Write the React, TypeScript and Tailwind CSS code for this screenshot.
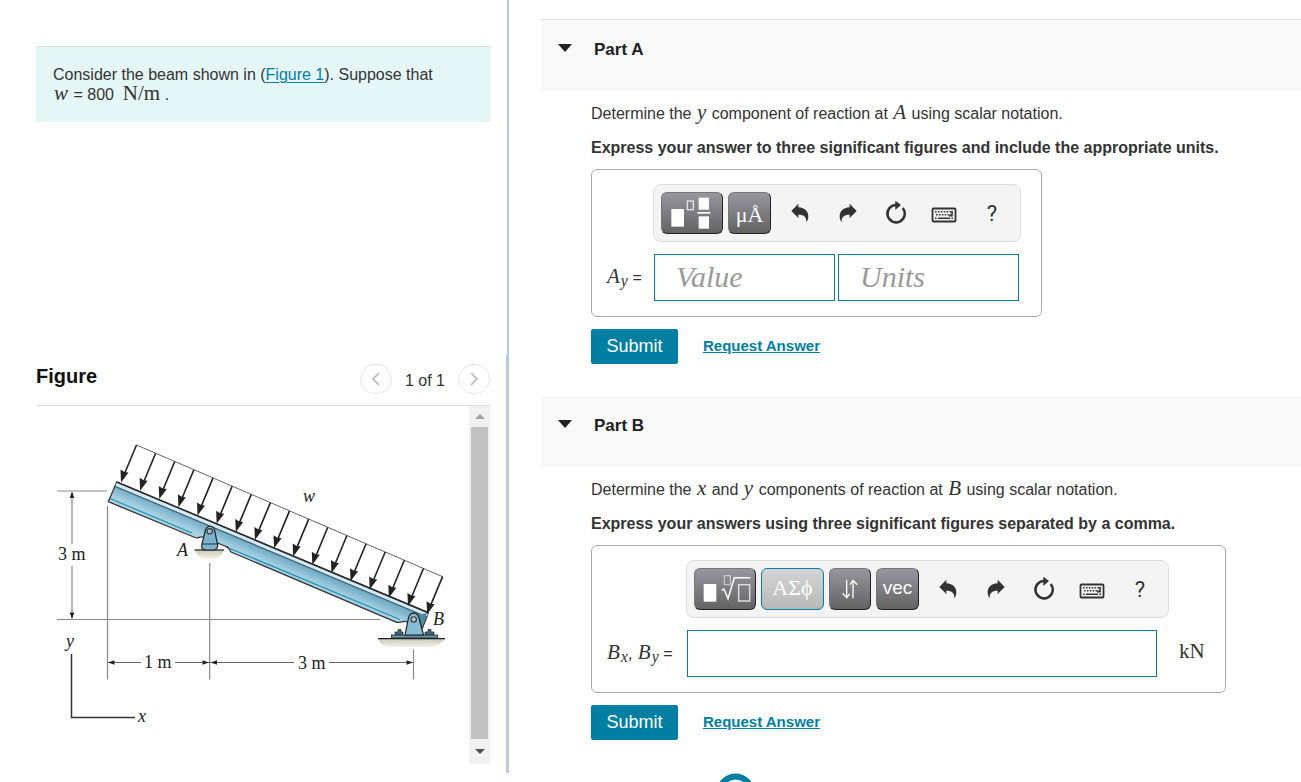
import React, { useState } from 'react';

const Var: React.FC<{ children: React.ReactNode }> = ({ children }) => (
  <i className="font-['Liberation_Serif',serif] text-[21px] leading-[0px] px-px">{children}</i>
);

const Sub: React.FC<{ children: React.ReactNode }> = ({ children }) => (
  <sub className="font-['Liberation_Serif',serif] italic text-[16px] leading-[0px] bottom-[-3px]">{children}</sub>
);

/* toolbar icons */
const UndoIcon = ({ flip = false }: { flip?: boolean }) => (
  <svg viewBox="0 0 66 66" className={flip ? 'w-[22px] h-[22px] -scale-x-100' : 'w-[22px] h-[22px]'} fill="#333">
    <path d="M7 27 L28 5 V16 C49 17 58 30 58 42 C58 50 56 56 52 61 C53 46 46 38 28 38 V48 Z" />
  </svg>
);

const ResetIcon = () => (
  <svg viewBox="0 0 72 72" className="w-6 h-6" fill="none">
    <path d="M36 12 A26 26 0 1 0 56 21" stroke="#333" strokeWidth="7.5" />
    <path d="M34 -1 L51 12 L34 27 Z" fill="#333" />
  </svg>
);

const KeyboardIcon = () => (
  <svg viewBox="0 0 26 16" className="w-[26px] h-4" fill="none" stroke="#333">
    <rect x="1.5" y="1.5" width="23" height="13" rx="1" strokeWidth="1.8" />
    <path d="M4 4.8 H22" strokeWidth="1.6" strokeDasharray="1.6 1.3" />
    <path d="M5 7.8 H20" strokeWidth="1.6" strokeDasharray="1.6 1.3" />
    <path d="M21 4 V8.6 H18" strokeWidth="1.6" />
    <path d="M4 11.2 H5.6 M7 11.2 H19 M20.4 11.2 H22" strokeWidth="1.6" />
  </svg>
);

const TemplateIcon = () => (
  <svg viewBox="0 0 120 96" className="w-10 h-8 mr-[3px]" fill="#fff">
    <rect x="1" y="36" width="38" height="53" />
    <rect x="49" y="12" width="18" height="26" fill="none" stroke="#e4e4e4" strokeWidth="4" />
    <rect x="83" y="2" width="31" height="36" />
    <rect x="79" y="45" width="39" height="5" />
    <rect x="83" y="58" width="31" height="37" />
  </svg>
);

const RootIcon = () => (
  <svg viewBox="0 0 144 90" className="w-12 h-[30px] ml-[3px]" fill="none">
    <rect x="2" y="30" width="38" height="53" fill="#fff" />
    <rect x="64" y="5" width="18" height="27" stroke="#ccc" strokeWidth="3.5" />
    <path d="M56 49 L63 45 L75 74 L94 11 H142" stroke="#fff" strokeWidth="4.5" />
    <rect x="107" y="32" width="33" height="49" stroke="#ddd" strokeWidth="4.5" />
  </svg>
);

const SwapIcon = () => (
  <svg viewBox="0 0 54 66" className="w-[18px] h-[22px]" fill="none" stroke="#fff" strokeWidth="4">
    <path d="M17 5 V58 M5 46 L17 59 L26 48" />
    <path d="M36 61 V8 M27 20 L36 7 L49 20" />
  </svg>
);

interface KeyProps {
  label: string;
  width: string;
  active?: boolean;
  children: React.ReactNode;
}

const Key: React.FC<KeyProps> = ({ label, width, active, children }) => (
  <button
    type="button"
    aria-label={label}
    className={`${width} h-[42px] flex items-center justify-center rounded-md border text-white leading-none ${
      active
        ? 'border-[#007fa3] bg-linear-to-b from-[#d4d4d4] to-[#b9b9b9]'
        : 'border-t-[#777] border-l-[#777] border-r-[#222] border-b-[#222] bg-linear-to-b from-[#9896a0] to-[#636363]'
    }`}
  >
    {children}
  </button>
);

const Tools = () => (
  <div className="flex items-center">
    <button type="button" aria-label="Undo" className="w-12 h-10 flex items-center justify-center"><UndoIcon /></button>
    <button type="button" aria-label="Redo" className="w-12 h-10 flex items-center justify-center"><UndoIcon flip /></button>
    <button type="button" aria-label="Reset" className="w-12 h-10 flex items-center justify-center"><ResetIcon /></button>
    <button type="button" aria-label="Keyboard" className="w-12 h-10 flex items-center justify-center pt-1"><KeyboardIcon /></button>
    <button type="button" aria-label="Help" className="w-12 h-10 flex items-center justify-center font-[Roboto,sans-serif] text-[22px] text-[#333]">?</button>
  </div>
);

const Toolbar: React.FC<{ children: React.ReactNode }> = ({ children }) => (
  <div className="h-[58px] flex items-center gap-[5px] rounded-lg border border-[#ddd] bg-[#f4f4f4] pl-[7px] pr-1">
    {children}
    <Tools />
  </div>
);

interface PartProps {
  title: string;
  topLine?: boolean;
  question: React.ReactNode;
  instruction: string;
  children: React.ReactNode;
}

const Part: React.FC<PartProps> = ({ title, topLine, question, instruction, children }) => {
  const [open, setOpen] = useState(true);

  return (
    <section className="mb-8">
      <h2 className={topLine ? 'bg-[#f9f9f9] border-t border-[#ddd]' : 'bg-[#f9f9f9]'}>
        <button
          type="button"
          aria-expanded={open}
          onClick={() => setOpen(!open)}
          className="w-full h-[71px] flex items-start pt-5 pl-[17px] text-[17px] leading-5 font-bold text-[#222]"
        >
          <svg viewBox="0 0 14 8" className="w-[14px] h-2 mt-1 mr-[22px]" fill="#222"><path d="M0 0 H14 L7 8 Z" /></svg>
          {title}
        </button>
      </h2>
      {open && (
        <div className="pl-[50px] pt-[13px]">
          <p className="leading-5 whitespace-nowrap">{question}</p>
          <p className="leading-5 mt-3.5 font-bold whitespace-nowrap">{instruction}</p>
          {children}
          <div className="flex items-center mt-3">
            <button type="submit" className="w-[87px] h-[35px] rounded-xs bg-[#007fa3] text-white text-[18px]">Submit</button>
            <a href="#request" className="ml-[25px] text-[15px] font-bold text-[#007fa3] underline">Request Answer</a>
          </div>
        </div>
      )}
    </section>
  );
};

/* distributed load: 17 arrows evenly spaced along the beam */
const ARROWS = Array.from({ length: 17 }, (_, i) => ({ x: 136.5 + i * 19.13, y: 445 + i * 8.23 }));

const BeamFigure = () => (
  <svg viewBox="36 406 433 358" className="w-[433px] h-[358px] shrink-0" role="img" aria-label="Inclined beam with distributed load w">
    <defs>
      <linearGradient id="beam" gradientUnits="userSpaceOnUse" x1="270" y1="548" x2="261" y2="569">
        <stop offset="0" stopColor="#5f9fbc" />
        <stop offset="0.6" stopColor="#a3cde0" />
        <stop offset="1" stopColor="#b5d8e8" />
      </linearGradient>
      <linearGradient id="ground" x1="0" y1="0" x2="0" y2="1">
        <stop offset="0" stopColor="#cfcab8" />
        <stop offset="1" stopColor="#f3f1ea" />
      </linearGradient>
    </defs>

    {/* dimension lines */}
    <g stroke="#8a8a8a" strokeWidth="1.2" fill="none">
      <path d="M57 491 H107 M57 619.5 H380" />
      <path d="M72 493 V544 M72 566 V618" />
      <path d="M107.5 506 V679.5 M209.7 563 V679.5 M413.5 649.5 V679.5" />
      <path d="M108 662.5 H141 M175 662.5 H294 M329 662.5 H413" stroke="#666" />
    </g>
    <g fill="#222">
      <path d="M72 491.5 l-2.3 6.5 h4.6 Z M72 619 l-2.3 -6.5 h4.6 Z" />
      <path d="M108 662.5 l6.5 -2.2 v4.4 Z M209 662.5 l-6.5 -2.2 v4.4 Z" />
      <path d="M210.5 662.5 l6.5 -2.2 v4.4 Z M413 662.5 l-6.5 -2.2 v4.4 Z" />
    </g>
    <path d="M71.5 654 V717.5 H135" fill="none" stroke="#333" strokeWidth="1.5" />

    {/* ground under both supports */}
    <path d="M195 550 H224 C221 558 216 559 210 559 C203 559 197 557 195 550 Z" fill="url(#ground)" />
    <path d="M378 639 H445 C439 646 433 648 423 647 H395 C386 648 382 646 378 639 Z" fill="url(#ground)" />

    {/* beam */}
    <path
      d="M116.7 482 L428.3 612.7 L422.5 628 L407 622 C404 620 401 623 396.7 622.3 L231 552 C229 549 229 547 226 546.5 L203 537 C200 536 198 539 195 537.5 L108.3 501.7 Z"
      fill="url(#beam)" stroke="#333" strokeWidth="1.3" strokeLinejoin="round"
    />
    <path d="M116.7 482.5 L428 613.2 L427 616.5 L115.5 486 Z" fill="#d3e8f0" />
    <path d="M115.3 486.5 L427 617" stroke="#46606c" strokeWidth="1.2" />
    <path d="M116.7 482 L428.3 612.7" stroke="#2b2b2b" strokeWidth="1.5" />
    <path d="M110 498.5 L192 533 M230 548.5 L400 619.5" stroke="#1b94ae" strokeWidth="1.2" />
    <path d="M427 613 L421 629 L417 615 Z" fill="#4e8ba5" />

    {/* load */}
    <path d="M136.5 445 L442.6 576.7" stroke="#666" strokeWidth="1" />
    {ARROWS.map(({ x, y }) => (
      <g key={x} transform={`translate(${x} ${y})`}>
        <path d="M0 0 L-12.5 30" stroke="#222" strokeWidth="1.6" />
        <path d="M-15.5 37.5 L-16 24.5 L-12 27 L-8 27.5 Z" fill="#222" />
      </g>
    ))}

    {/* support A */}
    <path d="M194.5 550 H224" stroke="#444" strokeWidth="1.5" />
    <path d="M201.7 545 L205.5 530 C207 525 213 525 214.5 530 L217.7 545 C218 548 216 550 213 550 H206 C202 550 201.5 548 201.7 545 Z" fill="#79b4d0" stroke="#222" strokeWidth="1.2" />
    <path d="M202 544 H217.5" stroke="#222" strokeWidth="0.9" />
    <circle cx="209.7" cy="531.3" r="2.7" fill="#b7bec2" stroke="#333" strokeWidth="1.1" />

    {/* support B */}
    <rect x="391.5" y="635" width="46" height="3" fill="#5c97b3" stroke="#222" strokeWidth="0.8" />
    <path d="M395 634.5 V632 H398 V629.5 H401 V632 H403 V634.5 Z M425 634.5 V632 H428 V629.5 H431 V632 H434 V634.5 Z" fill="#3a6c84" stroke="#222" strokeWidth="0.7" />
    <path d="M405 635 L408.5 618 C410 611.5 417.5 611.5 419 618 L423.5 635 Z" fill="#86bcd6" stroke="#222" strokeWidth="1.2" />
    <circle cx="413.7" cy="619.5" r="2.7" fill="#b7bec2" stroke="#333" strokeWidth="1.1" />
    <path d="M378 638.7 H445" stroke="#222" strokeWidth="1.3" />

    <g className="font-['Liberation_Serif',serif]" fill="#222" fontSize="18">
      <text x="58" y="560">3 m</text>
      <text x="144" y="668">1 m</text>
      <text x="298" y="669">3 m</text>
      <g fontStyle="italic">
        <text x="303" y="502">w</text>
        <text x="177" y="556">A</text>
        <text x="433" y="625">B</text>
        <text x="66" y="647">y</text>
        <text x="138" y="722">x</text>
      </g>
    </g>
  </svg>
);

const App: React.FC = () => {
  return (
    <div className="h-screen overflow-hidden bg-white grid grid-rows-1 grid-cols-[509fr_792fr] font-['Liberation_Sans',Arial,sans-serif] text-[16px] text-[#333]">
      <aside className="flex flex-col min-h-0 pb-[9px]">
        <div className="h-[355px] shrink-0 border-r-2 border-[#b8cce0] pt-[46px] pl-9 pr-4">
          <div className="bg-[#e5f6f7] border-t border-[#ddd] pt-[18px] pl-[17px] h-[76px] leading-5">
            <p>Consider the beam shown in (<a href="#figure" className="text-[#007fa3] underline underline-offset-2">Figure 1</a>). Suppose that</p>
            <p><Var>w</Var> = 800 &nbsp;<span className="font-['Liberation_Serif',serif] text-[21px] leading-[0px]">N/m</span> .</p>
          </div>
        </div>

        <div id="figure" className="flex-1 min-h-0 flex flex-col border-r-[3px] border-[#b8cce0] pl-9 pr-4 pb-[9px]">
          <div className="h-[51px] shrink-0 flex items-center justify-between border-b border-[#ddd]">
            <h2 className="text-[20px] leading-6 font-bold text-[#111] mb-2">Figure</h2>
            <div className="flex items-center">
              <button type="button" aria-label="Previous" className="w-8 h-[30px] mb-0.5 rounded-full border border-[#e6e6e6] flex items-center justify-center">
                <svg viewBox="0 0 10 14" className="w-2.5 h-3.5" fill="none" stroke="#c4c4c4" strokeWidth="2"><path d="M8 1 L2 7 L8 13" /></svg>
              </button>
              <span className="px-[13px] pt-0.5">1 of 1</span>
              <button type="button" aria-label="Next" className="w-8 h-[30px] mb-0.5 rounded-full border border-[#e6e6e6] flex items-center justify-center">
                <svg viewBox="0 0 10 14" className="w-2.5 h-3.5" fill="none" stroke="#c4c4c4" strokeWidth="2"><path d="M2 1 L8 7 L2 13" /></svg>
              </button>
            </div>
          </div>
          <div className="flex-1 min-h-0 flex justify-between overflow-hidden">
            <BeamFigure />
            <div className="w-[21px] shrink-0 bg-[#f1f1f1] flex flex-col items-center">
              <button type="button" aria-label="Scroll up" className="h-[21px] w-full flex items-center justify-center">
                <svg viewBox="0 0 10 5" className="w-2.5 h-[5px]" fill="#a3a3a3"><path d="M0 5 L5 0 L10 5 Z" /></svg>
              </button>
              <div className="flex-1 w-[17px] bg-[#c1c1c1]" />
              <button type="button" aria-label="Scroll down" className="h-[25px] w-full flex items-center justify-center">
                <svg viewBox="0 0 10 5" className="w-2.5 h-[5px]" fill="#505050"><path d="M0 0 L5 5 L10 0 Z" /></svg>
              </button>
            </div>
          </div>
        </div>
      </aside>

      <main className="pl-8 pt-[19px] min-w-0">
        <Part
          title="Part A"
          topLine
          question={<>Determine the <Var>y</Var> component of reaction at <Var>A</Var> using scalar notation.</>}
          instruction="Express your answer to three significant figures and include the appropriate units."
        >
          <div className="w-fit mt-[11px] rounded-md border border-[#aaa] pt-3.5 pb-[15px] pr-5 grid grid-cols-[61px_auto] gap-y-3">
            <div className="col-start-2">
              <Toolbar>
                <Key label="Templates" width="w-[62px]"><TemplateIcon /></Key>
                <Key label="Units" width="w-[43px]"><span className="font-['Liberation_Serif',serif] text-[22px] pt-1">μÅ</span></Key>
              </Toolbar>
            </div>
            <label htmlFor="ay-value" className="pl-3.5 self-center whitespace-nowrap">
              <Var>A</Var><Sub>y</Sub> =
            </label>
            <div className="flex gap-[3px] pl-px">
              <input id="ay-value" placeholder="Value" className="w-[181px] h-[47px] border border-[#007fa3] pl-[21px] pb-0.5 font-['Liberation_Serif',serif] italic text-[30px] placeholder:text-[#999]" />
              <input aria-label="Units" placeholder="Units" className="w-[181px] h-[47px] border border-[#007fa3] pl-[21px] pb-0.5 font-['Liberation_Serif',serif] italic text-[30px] placeholder:text-[#999]" />
            </div>
          </div>
        </Part>

        <Part
          title="Part B"
          question={<>Determine the <Var>x</Var> and <Var>y</Var> components of reaction at <Var>B</Var> using scalar notation.</>}
          instruction="Express your answers using three significant figures separated by a comma."
        >
          <div className="w-fit mt-[11px] rounded-md border border-[#aaa] pt-3.5 pb-[15px] pr-5 grid grid-cols-[94px_473px_auto] gap-y-3">
            <div className="col-start-2 col-span-2 w-fit">
              <Toolbar>
                <Key label="Templates" width="w-[62px]"><RootIcon /></Key>
                <Key label="Greek letters" width="w-[63px]" active><span className="font-['Liberation_Serif',serif] text-[22px] pb-0.5">ΑΣϕ</span></Key>
                <Key label="Arrows" width="w-[42px]"><SwapIcon /></Key>
                <Key label="Vector" width="w-[43px]"><span className="text-[19px] pb-1">vec</span></Key>
              </Toolbar>
            </div>
            <label htmlFor="b-values" className="col-start-1 pl-3.5 self-center whitespace-nowrap">
              <Var>B</Var><Sub>x</Sub>, <Var>B</Var><Sub>y</Sub> =
            </label>
            <input id="b-values" className="w-[470px] h-[47px] ml-px border border-[#007fa3] px-2 font-['Liberation_Serif',serif] text-[24px]" />
            <span className="pl-5 pb-1 self-center font-['Liberation_Serif',serif] text-[21px]">kN</span>
          </div>
        </Part>

        <svg viewBox="0 0 40 40" className="w-10 h-10 ml-[174px] mt-0.5" fill="none">
          <circle cx="20.5" cy="20.5" r="16" stroke="#007fa3" strokeWidth="6" />
        </svg>
      </main>
    </div>
  );
};

export default App;
